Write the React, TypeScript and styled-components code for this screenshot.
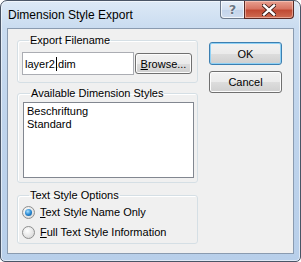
import { FC } from 'react';
import styled, { createGlobalStyle } from 'styled-components';

const GlobalStyle = createGlobalStyle`
  html, body {
    margin: 0;
    padding: 0;
    background: #ffffff;
  }
  body {
    font-family: "Liberation Sans", Arial, sans-serif;
    font-size: 11px;
    color: #000;
  }
`;

const styles = ['Beschriftung', 'Standard'];

const App: FC = () => {
  return (
    <>
      <GlobalStyle />
      <Window>
        <TitleBar>
          <Title>Dimension Style Export</Title>
          <CaptionButtons>
            <HelpButton>?</HelpButton>
            <CloseButton>
              <svg width="14" height="12" viewBox="0 0 14 12">
                <path
                  d="M2 1.5 L12 10.5 M12 1.5 L2 10.5"
                  stroke="#3a1a16"
                  strokeWidth="4.2"
                  strokeLinecap="square"
                />
                <path
                  d="M2 1.5 L12 10.5 M12 1.5 L2 10.5"
                  stroke="#ffffff"
                  strokeWidth="2.4"
                  strokeLinecap="square"
                />
              </svg>
            </CloseButton>
          </CaptionButtons>
        </TitleBar>

        <Client>
          <LeftColumn>
            <Group $bottom={7}>
              <Legend>Export Filename</Legend>
              <FileRow>
                <TextField>
                  layer2
                  <Caret />
                  .dim
                </TextField>
                <PushButton $width={57} $height={21}>
                  <u>B</u>rowse...
                </PushButton>
              </FileRow>
            </Group>

            <Group $gap={4} $top={2} $bottom={4} $left={5}>
              <Legend>Available Dimension Styles</Legend>
              <ListBox>
                {styles.map((s) => (
                  <ListItem key={s}>{s}</ListItem>
                ))}
              </ListBox>
            </Group>

            <Group $gap={6} $top={0} $bottom={1} $left={4}>
              <Legend>Text Style Options</Legend>
              <RadioRow>
                <RadioMark $checked />
                <span>
                  <u>T</u>ext Style Name Only
                </span>
              </RadioRow>
              <RadioRow>
                <RadioMark />
                <span>
                  <u>F</u>ull Text Style Information
                </span>
              </RadioRow>
            </Group>
          </LeftColumn>

          <ButtonColumn>
            <PushButton $width={73} $height={23} $default>
              OK
            </PushButton>
            <PushButton $width={73} $height={22}>
              Cancel
            </PushButton>
          </ButtonColumn>
        </Client>
      </Window>
    </>
  );
};

const Window = styled.div`
  width: 301px;
  height: 262px;
  box-sizing: border-box;
  border: 1px solid #4a5566;
  border-radius: 7px 7px 5px 5px;
  background: linear-gradient(
    to bottom,
    #dde9f6 0px,
    #cadcf0 26px,
    #bfd4ec 120px,
    #b8cfea 100%
  );
  box-shadow: inset 0 0 0 1px rgba(255, 255, 255, 0.55);
  display: flex;
  flex-direction: column;
  overflow: hidden;
`;

const TitleBar = styled.div`
  height: 27px;
  display: flex;
  align-items: flex-start;
  justify-content: space-between;
  padding-left: 7px;
`;

const Title = styled.div`
  font-family: "Liberation Sans", Arial, sans-serif;
  font-size: 12px;
  line-height: 14px;
  margin-top: 7px;
  color: #000;
`;

const CaptionButtons = styled.div`
  display: flex;
  margin-right: 6px;
`;

const HelpButton = styled.div`
  width: 24px;
  height: 18px;
  box-sizing: border-box;
  border: 1px solid #6d7a8c;
  border-top: none;
  border-right: none;
  border-radius: 0 0 0 4px;
  background: linear-gradient(to bottom, #e6eef8 0%, #d3e0f0 50%, #c2d3ea 51%, #cfdcee 100%);
  box-shadow: inset 0 0 0 1px rgba(255, 255, 255, 0.7);
  display: flex;
  align-items: center;
  justify-content: center;
  font-family: "DejaVu Sans", sans-serif;
  font-weight: bold;
  font-size: 13px;
  color: #6b7684;
  text-shadow: 0 0 1px #fff, 0 0 2px #fff;
`;

const CloseButton = styled.div`
  width: 50px;
  height: 18px;
  box-sizing: border-box;
  border: 1px solid #5a2a25;
  border-top: none;
  border-radius: 0 0 4px 0;
  background: linear-gradient(to bottom, #e8a090 0%, #d77563 45%, #c14a33 55%, #cf6c52 100%);
  box-shadow: inset 0 0 0 1px rgba(255, 220, 210, 0.5);
  display: flex;
  align-items: center;
  justify-content: center;
`;

const Client = styled.div`
  flex: 1;
  margin: 0 6px 7px 6px;
  border: 1px solid #8a9bb0;
  background: #f0f0f0;
  display: flex;
  padding: 5px 0 0 9px;
  gap: 11px;
`;

const LeftColumn = styled.div`
  width: 181px;
  display: flex;
  flex-direction: column;
`;

const Group = styled.fieldset<{ $gap?: number; $top?: number; $bottom?: number; $left?: number }>`
  margin: ${(p) => p.$gap ?? 0}px 0 0 0;
  min-width: 0;
  border: 1px solid #d5dfe5;
  border-radius: 3px;
  box-shadow: inset 1px 1px 0 #fff;
  padding: ${(p) => p.$top ?? 5}px 3px ${(p) => p.$bottom ?? 4}px ${(p) => p.$left ?? 4}px;
`;

const Legend = styled.legend`
  padding: 0 1px;
  margin-left: 7px;
  line-height: 13px;
  font-size: 11px;
`;

const FileRow = styled.div`
  display: flex;
  align-items: center;
  gap: 1px;
`;

const TextField = styled.div`
  width: 112px;
  height: 23px;
  box-sizing: border-box;
  border: 1px solid #abadb3;
  background: #fff;
  padding: 0 0 0 2px;
  display: flex;
  align-items: center;
  white-space: pre;
`;

const Caret = styled.span`
  display: inline-block;
  width: 1px;
  height: 14px;
  background: #000;
  margin: 0 -2px 0 1px;
  position: relative;
  z-index: 1;
`;

const PushButton = styled.div<{ $width: number; $height: number; $default?: boolean }>`
  width: ${(p) => p.$width}px;
  height: ${(p) => p.$height}px;
  box-sizing: border-box;
  border: 1px solid ${(p) => (p.$default ? '#3c7fb1' : '#707070')};
  border-radius: 3px;
  background: linear-gradient(to bottom, #f2f2f2 0%, #ebebeb 50%, #dddddd 51%, #cfcfcf 100%);
  box-shadow: inset 0 0 0 1px ${(p) => (p.$default ? '#8fd1f5' : '#fcfcfc')};
  display: flex;
  align-items: center;
  justify-content: center;
  font-size: 11px;
  font-weight: normal;
  color: #000;
`;

const ListBox = styled.div`
  width: 171px;
  height: 76px;
  box-sizing: border-box;
  border: 1px solid #828790;
  background: #fff;
  padding: 2px 0 0 3px;
`;

const ListItem = styled.div`
  line-height: 13px;
  font-size: 11px;
`;

const RadioRow = styled.label`
  display: flex;
  align-items: center;
  gap: 5px;
  height: 20px;
  line-height: 13px;
`;

const RadioMark = styled.span<{ $checked?: boolean }>`
  width: 13px;
  height: 13px;
  box-sizing: border-box;
  border-radius: 50%;
  border: 1px solid #8e8f8f;
  background: radial-gradient(circle at 40% 35%, #ffffff 0%, #e6e6e6 55%, #cfcfcf 100%);
  position: relative;
  flex: none;

  &::after {
    content: '';
    display: ${(p) => (p.$checked ? 'block' : 'none')};
    position: absolute;
    left: 2px;
    top: 2px;
    width: 7px;
    height: 7px;
    border-radius: 50%;
    background: radial-gradient(circle at 40% 35%, #a8e0ff 0%, #2a8ad4 50%, #0d4f8b 100%);
  }
`;

const ButtonColumn = styled.div`
  display: flex;
  flex-direction: column;
  gap: 6px;
  padding-top: 8px;
`;

export default App;
